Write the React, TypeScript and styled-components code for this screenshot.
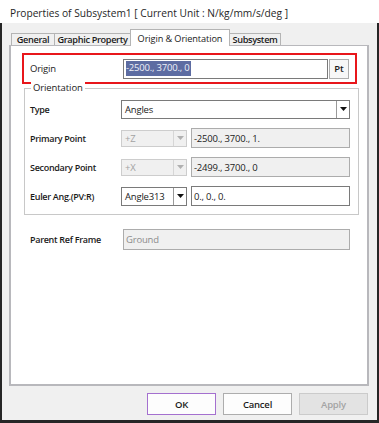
import React from 'react';
import styled, { createGlobalStyle } from 'styled-components';

const GlobalStyle = createGlobalStyle`
  html, body { margin: 0; padding: 0; background: #fff; }
  body { font-family: "Open Sans", "Noto Sans", sans-serif; color: #1b1b1b; }
  * { box-sizing: border-box; }
`;

const Window = styled.div`
  width: 379px;
  height: 423px;
  display: flex;
  flex-direction: column;
  background: #fff;
`;

const TitleBar = styled.div`
  height: 23px;
  padding: 3px 0 0 10px;
  display: flex;
  align-items: center;
  font-size: 10.2px;
  color: #1f1f1f;
`;

const Frame = styled.div`
  flex: 1;
  display: flex;
  flex-direction: column;
  background: #f0f0f0;
  border: 0 solid #262626;
  border-width: 0 2px 3px 2px;
  padding: 6px 8px 5px 7px;
`;

const TabStrip = styled.div`
  display: flex;
  align-items: flex-end;
  height: 17px;
  margin: 0 0 -1px 2px;
  position: relative;
  z-index: 1;
`;

const Tab = styled.div<{ $w: number; $active?: boolean }>`
  width: ${p => p.$w}px;
  height: ${p => (p.$active ? 17 : 12)}px;
  margin-bottom: ${p => (p.$active ? 0 : 1)}px;
  margin-left: -1px;
  &:first-child { margin-left: 0; }
  display: flex;
  align-items: center;
  justify-content: center;
  background: ${p => (p.$active ? '#fff' : '#f0f0f0')};
  border: 1px solid #b4b4b4;
  border-bottom: none;
  font-size: 9.2px;
  font-weight: ${p => (p.$active ? 400 : 600)};
  letter-spacing: ${p => (p.$active ? -0.1 : -0.35)}px;
  color: #1b1b1b;
  white-space: nowrap;
`;

const Panel = styled.div`
  height: 341px;
  display: flex;
  flex-direction: column;
  background: #fff;
  border: solid #b8b8bc;
  border-width: 1px 2px 2px 2px;
  padding: 7px 10px 0 11px;
`;

const RedBox = styled.div`
  height: 31px;
  display: flex;
  align-items: center;
  border: 2px solid #e8161b;
  padding: 0 6px 0 6px;
`;

const Label = styled.div<{ $w: number; $bold?: boolean }>`
  width: ${p => p.$w}px;
  flex: none;
  font-size: ${p => (p.$bold ? 9 : 9.5)}px;
  font-weight: ${p => (p.$bold ? 600 : 400)};
  letter-spacing: ${p => (p.$bold ? -0.3 : -0.2)}px;
  white-space: nowrap;
`;

const TextField = styled.div<{ $w?: number; $h?: number; $disabled?: boolean; $muted?: boolean }>`
  ${p => (p.$w ? `width: ${p.$w}px; flex: none;` : 'flex: 1;')}
  height: ${p => p.$h ?? 20}px;
  display: flex;
  align-items: center;
  padding-left: 2px;
  border: 1px solid ${p => (p.$disabled ? '#acacac' : '#7a7a7a')};
  background: ${p => (p.$disabled ? '#f0f0f0' : '#fff')};
  color: ${p => (p.$muted ? '#8c8c8c' : '#1b1b1b')};
  font-size: 9.5px;
  letter-spacing: -0.2px;
  white-space: nowrap;
  overflow: hidden;
`;

const Selected = styled.span`
  background: #5d6ca2;
  color: #eef0f8;
  padding: 0 1px 1px 0;
  line-height: 14px;
`;

const PtButton = styled.div`
  width: 20px;
  height: 20px;
  margin-left: 1px;
  display: flex;
  align-items: center;
  justify-content: center;
  border: 1px solid #adadad;
  background: #f7f7f7;
  font-size: 9.5px;
  font-weight: 600;
`;

const GroupBox = styled.div`
  position: relative;
  margin: 4px -2px 0 2px;
  border: 1px solid #c8c8c8;
  padding: 10px 8px 8px 5px;
  display: grid;
  row-gap: 9px;
`;

const Legend = styled.div`
  position: absolute;
  top: -8px;
  left: 6px;
  padding: 0 2px;
  background: #fff;
  font-size: 9.5px;
  line-height: 14px;
  letter-spacing: -0.1px;
`;

const Row = styled.div`
  height: 20px;
  display: flex;
  align-items: center;
  gap: 4px;
`;

const Select = styled.div<{ $w?: number; $h: number; $disabled?: boolean }>`
  ${p => (p.$w ? `width: ${p.$w}px; flex: none;` : 'flex: 1;')}
  height: ${p => p.$h}px;
  display: flex;
  border: 1px solid ${p => (p.$disabled ? '#cdcdcd' : '#7a7a7a')};
  background: ${p => (p.$disabled ? '#f0f0f0' : '#fff')};
  color: ${p => (p.$disabled ? '#a2a2a2' : '#1b1b1b')};
  font-size: 9.5px;
  letter-spacing: -0.2px;
`;

const SelectText = styled.div`
  flex: 1;
  display: flex;
  align-items: center;
  padding-left: 3px;
  white-space: nowrap;
`;

const ArrowBox = styled.div<{ $disabled?: boolean }>`
  width: 13px;
  display: flex;
  align-items: center;
  justify-content: center;
  border-left: 1px solid ${p => (p.$disabled ? '#d6d6d6' : '#9a9a9a')};
`;

const ParentRow = styled.div`
  display: flex;
  align-items: center;
  margin-top: 14px;
  padding: 0 7px 0 8px;
`;

const ButtonRow = styled.div`
  display: flex;
  justify-content: flex-end;
  gap: 7px;
  margin-top: 7px;
  padding-right: 1px;
`;

const Button = styled.div<{ $variant?: 'focus' | 'disabled' }>`
  width: 69px;
  height: 22px;
  display: flex;
  align-items: center;
  justify-content: center;
  font-size: 9.5px;
  font-weight: 600;
  letter-spacing: -0.2px;
  border: 1px solid
    ${p => (p.$variant === 'focus' ? '#a470cf' : p.$variant === 'disabled' ? '#cbcbcb' : '#adadad')};
  background: ${p => (p.$variant === 'disabled' ? '#e3e3e3' : '#fdfdfd')};
  color: ${p => (p.$variant === 'disabled' ? '#a4a4a4' : '#1b1b1b')};
`;

const Arrow = ({ color }: { color: string }) => (
  <svg width="7" height="4" viewBox="0 0 7 4">
    <polygon points="0,0 7,0 3.5,4" fill={color} />
  </svg>
);

type SelProps = { value: string; w?: number; h: number; disabled?: boolean };

const Combo = ({ value, w, h, disabled }: SelProps) => (
  <Select $w={w} $h={h} $disabled={disabled}>
    <SelectText>{value}</SelectText>
    <ArrowBox $disabled={disabled}>
      <Arrow color={disabled ? '#b0b0b0' : '#111'} />
    </ArrowBox>
  </Select>
);

export default function App() {
  return (
    <>
      <GlobalStyle />
      <Window>
        <TitleBar>Properties of Subsystem1 [ Current Unit : N/kg/mm/s/deg ]</TitleBar>
        <Frame>
          <TabStrip>
            <Tab $w={44}>General</Tab>
            <Tab $w={77}>Graphic Property</Tab>
            <Tab $w={100} $active>Origin &amp; Orientation</Tab>
            <Tab $w={52}>Subsystem</Tab>
          </TabStrip>
          <Panel>
            <RedBox>
              <Label $w={93}>Origin</Label>
              <TextField $w={205}>
                <Selected>-2500., 3700., 0</Selected>
              </TextField>
              <PtButton>Pt</PtButton>
            </RedBox>

            <GroupBox>
              <Legend>Orientation</Legend>
              <Row>
                <Label $w={87} $bold>Type</Label>
                <Combo value="Angles" h={19} />
              </Row>
              <Row>
                <Label $w={87} $bold>Primary Point</Label>
                <Combo value="+Z" w={66} h={17} disabled />
                <TextField $disabled>-2500., 3700., 1.</TextField>
              </Row>
              <Row>
                <Label $w={87} $bold>Secondary Point</Label>
                <Combo value="+X" w={66} h={17} disabled />
                <TextField $disabled>-2499., 3700., 0</TextField>
              </Row>
              <Row>
                <Label $w={87} $bold>Euler Ang.(PV:R)</Label>
                <Combo value="Angle313" w={66} h={19} />
                <TextField>0., 0., 0.</TextField>
              </Row>
            </GroupBox>

            <ParentRow>
              <Label $w={93} $bold>Parent Ref Frame</Label>
              <TextField $h={21} $disabled $muted>Ground</TextField>
            </ParentRow>
          </Panel>
          <ButtonRow>
            <Button $variant="focus">OK</Button>
            <Button>Cancel</Button>
            <Button $variant="disabled">Apply</Button>
          </ButtonRow>
        </Frame>
      </Window>
    </>
  );
}
